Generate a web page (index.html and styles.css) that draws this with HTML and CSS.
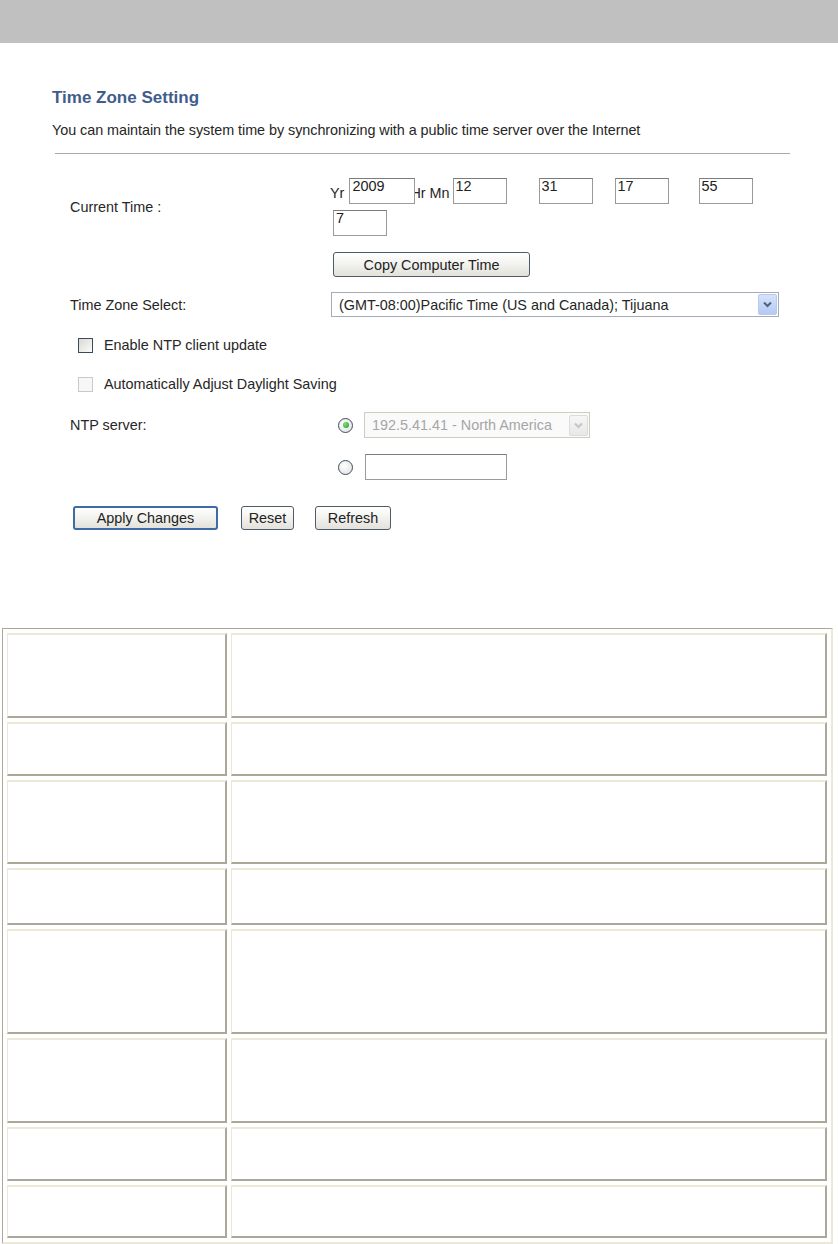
FILE: index.html
```html
<!DOCTYPE html>
<html lang="en">
<head>
    <meta charset="UTF-8">
    <meta name="viewport" content="width=device-width, initial-scale=1.0">
    <title>Time Zone Setting</title>
    <link rel="stylesheet" href="styles.css">
</head>
<body>
    <div class="topbar"></div>

    <div class="page">
        <h1 class="title">Time Zone Setting</h1>
        <p class="desc">You can maintain the system time by synchronizing with a public time server over the Internet</p>
        <hr class="rule">

        <div class="form">
            <!-- 当前时间 -->
            <div class="row row-time">
                <div class="label">Current Time :</div>
                <div class="ctrl">
                    <div class="time-line">
                        <span class="tlabel">Yr</span>
                        <input type="text" class="box box-year" value="2009">
                        <span class="tlabel tlabel-hm">Hr Mn</span>
                        <input type="text" class="box box-mon" value="12">
                        <input type="text" class="box box-day" value="31">
                        <input type="text" class="box box-hr" value="17">
                        <input type="text" class="box box-min" value="55">
                    </div>
                    <div class="time-line">
                        <input type="text" class="box box-sec" value="7">
                    </div>
                </div>
            </div>

            <div class="row row-copy">
                <div class="label"></div>
                <div class="ctrl"><button type="button" class="btn btn-copy">Copy Computer Time</button></div>
            </div>

            <div class="row row-tz">
                <div class="label">Time Zone Select:</div>
                <div class="ctrl">
                    <div class="dropdown dropdown-tz">
                        <span class="dd-text">(GMT-08:00)Pacific Time (US and Canada); Tijuana</span>
                        <span class="dd-arrow">
                            <svg width="9" height="7" viewBox="0 0 9 7"><polyline points="1,1.5 4.5,5 8,1.5" fill="none" stroke="#4d6185" stroke-width="2"/></svg>
                        </span>
                    </div>
                </div>
            </div>

            <div class="check-row check-ntp">
                <span class="checkbox"></span>
                <span class="check-text">Enable NTP client update</span>
            </div>

            <div class="check-row check-dst">
                <span class="checkbox disabled"></span>
                <span class="check-text">Automatically Adjust Daylight Saving</span>
            </div>

            <div class="row row-ntp">
                <div class="label">NTP server:</div>
                <div class="ctrl ctrl-inline">
                    <span class="radio on"></span>
                    <div class="dropdown dropdown-ntp disabled">
                        <span class="dd-text">192.5.41.41 - North America</span>
                        <span class="dd-arrow">
                            <svg width="9" height="7" viewBox="0 0 9 7"><polyline points="1,1.5 4.5,5 8,1.5" fill="none" stroke="#c4c4c4" stroke-width="2"/></svg>
                        </span>
                    </div>
                </div>
            </div>

            <div class="row row-manual">
                <div class="label"></div>
                <div class="ctrl ctrl-inline">
                    <span class="radio"></span>
                    <input type="text" class="box box-server" value="">
                </div>
            </div>

            <div class="actions">
                <button type="button" class="btn btn-apply">Apply Changes</button>
                <button type="button" class="btn btn-reset">Reset</button>
                <button type="button" class="btn btn-refresh">Refresh</button>
            </div>
        </div>
    </div>

    <!-- 说明表格 -->
    <div class="info-table">
        <div class="cell"></div><div class="cell"></div>
        <div class="cell"></div><div class="cell"></div>
        <div class="cell"></div><div class="cell"></div>
        <div class="cell"></div><div class="cell"></div>
        <div class="cell"></div><div class="cell"></div>
        <div class="cell"></div><div class="cell"></div>
        <div class="cell"></div><div class="cell"></div>
        <div class="cell"></div><div class="cell"></div>
    </div>
</body>
</html>
```

FILE: styles.css
```css
/* 基本样式 */
body { margin: 0; background: #fff; color: #262626; font-family: "Liberation Sans", Arial, sans-serif; font-size: 14.4px; }
.topbar { height: 43px; background-color: #c0c0c0; }

.page { padding-left: 52px; }
.title { margin: 0; padding-top: 45px; font-size: 17px; line-height: 20px; font-weight: bold; color: #3f5d8c; }
.desc { margin: 13px 0 0; line-height: 18px; letter-spacing: -0.05px; }
.rule { border: 0; height: 1px; background: #a9a9a9; margin: 14px 0 0 3px; width: 735px; }

/* 表单 */
.form { padding-left: 18px; }
.row { display: grid; grid-template-columns: 260px 1fr; align-items: center; }
.label { line-height: 18px; }
.ctrl-inline { display: flex; align-items: center; }

.row-time { margin-top: 24px; }
.time-line { display: flex; align-items: flex-end; height: 26px; }
.time-line + .time-line { margin-top: 6px; }
.tlabel { line-height: 17px; padding-bottom: 2px; }
.tlabel-hm { margin-left: -5px; }

input.box { box-sizing: border-box; height: 26px; width: 54px; margin: 0; border: 1px solid #9a9a9a; border-top-color: #7c7c7c; padding: 0 2px 10px; font-family: "Liberation Sans", Arial, sans-serif; font-size: 14.4px; color: #222; background: #fff; }
input.box-year { width: 66px; margin-left: 5px; position: relative; z-index: 1; }
input.box-mon { margin-left: 3px; }
input.box-day { margin-left: 32px; }
input.box-hr { margin-left: 22px; }
input.box-min { margin-left: 30px; }
input.box-sec { margin-left: 3px; }
input.box-server { width: 142px; margin-left: 12px; }

/* 按钮 */
.btn { box-sizing: border-box; height: 24px; padding: 0; border: 1px solid #4f5b68; border-radius: 3px; background: linear-gradient(#ffffff, #f3f3f0 45%, #e2e1da); font-family: "Liberation Sans", Arial, sans-serif; font-size: 14.4px; color: #222; cursor: pointer; }
.row-copy { margin-top: 16px; }
.btn-copy { width: 197px; height: 25px; margin-left: 3px; }

.row-tz { margin-top: 15px; }
.dropdown { box-sizing: border-box; display: flex; align-items: center; justify-content: space-between; height: 25px; border: 1px solid #a4acb6; background: #fff; padding-left: 7px; }
.dropdown-tz { width: 448px; margin-left: 1px; }
.dd-arrow { box-sizing: border-box; display: flex; align-items: center; justify-content: center; width: 19px; height: 21px; margin-right: 1px; border: 1px solid #b7c9f0; border-radius: 2px; background: linear-gradient(#d6e2fb, #b6c9f3); }
.dropdown.disabled { border-color: #cfcdc2; background: #fafafa; color: #a6a6a6; }
.dropdown.disabled .dd-arrow { border-color: #dcdcdc; background: linear-gradient(#f6f6f6, #e8e8e8); }
.dropdown-ntp { width: 226px; height: 26px; margin-left: 11px; }

/* 复选框 */
.check-row { display: flex; align-items: center; margin-left: 8px; height: 16px; }
.check-ntp { margin-top: 20px; }
.check-dst { margin-top: 23px; }
.checkbox { box-sizing: border-box; width: 15px; height: 15px; border: 1px solid #3b4a5c; background: linear-gradient(135deg, #d8d8d2, #fbfbfb); }
.checkbox.disabled { border-color: #c9c9c9; background: #f7f7f7; }
.check-text { margin-left: 11px; line-height: 18px; }

/* 单选框 */
.radio { box-sizing: border-box; width: 15px; height: 15px; margin-left: 8px; border: 1px solid #3d4d62; border-radius: 50%; background: radial-gradient(circle at 40% 40%, #ffffff, #dedede); display: flex; align-items: center; justify-content: center; flex-shrink: 0; }
.radio.on::after { content: ""; width: 6px; height: 6px; border-radius: 50%; background: radial-gradient(circle at 35% 35%, #7ee07a, #1c9a1c); }
.row-ntp { margin-top: 20px; }
.row-manual { margin-top: 16px; }

.actions { display: flex; margin-top: 26px; margin-left: 3px; }
.btn-apply { width: 145px; border: 2px solid #3f6aa8; border-radius: 3px; }
.btn-reset { width: 53px; margin-left: 23px; }
.btn-refresh { width: 76px; margin-left: 21px; }

/* 说明表格 */
.info-table { display: grid; grid-template-columns: 220px 596px; grid-template-rows: 85px 54px 84px 57px 105px 85px 54px 53px; gap: 4px; box-sizing: border-box; width: 831px; margin: 98px 0 0 2px; padding: 4px; border-style: solid; border-width: 1px 2px 2px 1px; border-color: #aca899 #ece9d8 #ece9d8 #aca899; }
.cell { border-style: solid; border-width: 2px 2px 2px 1px; border-color: #ece9d8 #aca899 #aca899 #ece9d8; }
```
